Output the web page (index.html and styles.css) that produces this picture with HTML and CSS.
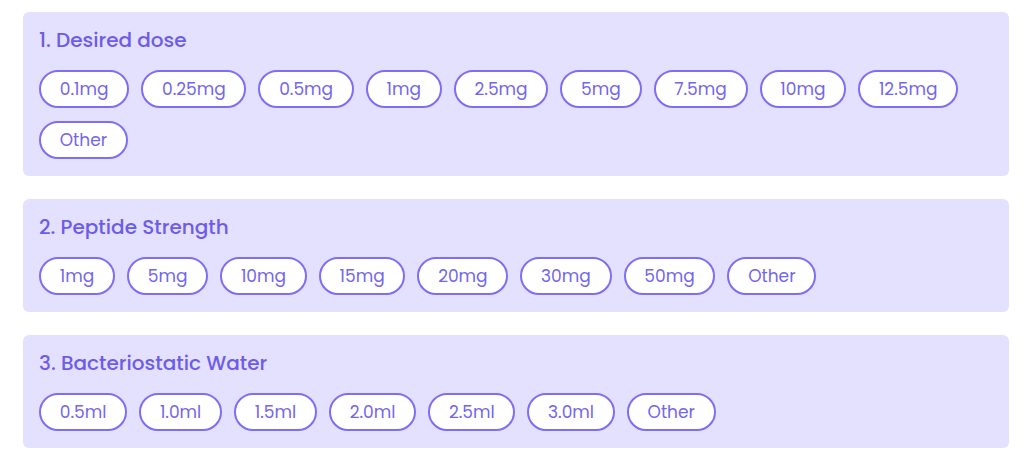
FILE: index.html
```html
<!DOCTYPE html>
<html lang="en">
<head>
    <meta charset="UTF-8">
    <meta name="viewport" content="width=device-width, initial-scale=1.0">
    <title>Peptide Calculator</title>
    <link rel="stylesheet" href="styles.css">
</head>
<body>
    <div class="calculator">
        <div class="step">
            <h2>1. Desired dose</h2>
            <div class="options">
                <button class="pill">0.1mg</button>
                <button class="pill">0.25mg</button>
                <button class="pill">0.5mg</button>
                <button class="pill">1mg</button>
                <button class="pill">2.5mg</button>
                <button class="pill">5mg</button>
                <button class="pill">7.5mg</button>
                <button class="pill">10mg</button>
                <button class="pill">12.5mg</button>
                <button class="pill">Other</button>
            </div>
        </div>

        <div class="step">
            <h2>2. Peptide Strength</h2>
            <div class="options">
                <button class="pill">1mg</button>
                <button class="pill">5mg</button>
                <button class="pill">10mg</button>
                <button class="pill">15mg</button>
                <button class="pill">20mg</button>
                <button class="pill">30mg</button>
                <button class="pill">50mg</button>
                <button class="pill">Other</button>
            </div>
        </div>

        <div class="step">
            <h2>3. Bacteriostatic Water</h2>
            <div class="options">
                <button class="pill">0.5ml</button>
                <button class="pill">1.0ml</button>
                <button class="pill">1.5ml</button>
                <button class="pill">2.0ml</button>
                <button class="pill">2.5ml</button>
                <button class="pill">3.0ml</button>
                <button class="pill">Other</button>
            </div>
        </div>
    </div>
</body>
</html>
```

FILE: styles.css
```css
body {
    margin: 0;
    font-family: 'Poppins', 'Inter', sans-serif;
    background-color: #fff;
}
.calculator {
    padding: 12px 15px 0 23px;
}
.step {
    background-color: #e4e0ff;
    border-radius: 6px;
    padding: 16px 16px 17px;
    margin-bottom: 23px;
}
.step h2 {
    margin: 0 0 18px;
    font-size: 20px;
    line-height: 24px;
    font-weight: 500;
    color: #6c5ce7;
}
.options {
    display: flex;
    flex-wrap: wrap;
    gap: 13px 12px;
}
.pill {
    height: 38px;
    padding: 0 18.75px;
    border: 2px solid #7d6ef5;
    border-radius: 19px;
    background-color: #fff;
    font-family: inherit;
    font-size: 17px;
    color: #7365ee;
    cursor: pointer;
}
```
